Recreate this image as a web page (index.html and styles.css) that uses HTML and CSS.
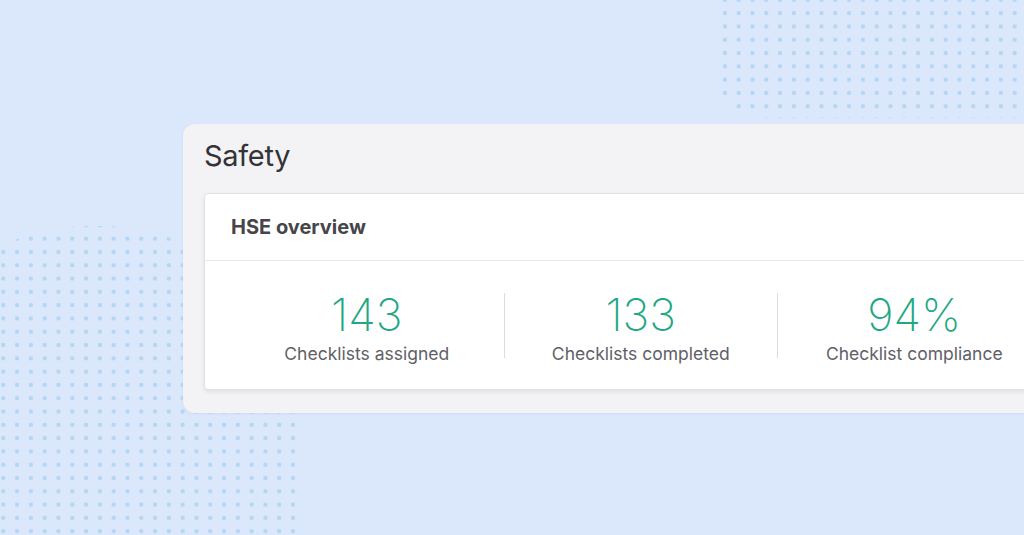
FILE: index.html
```html
<!DOCTYPE html>
<html lang="en">
<head>
<meta charset="utf-8">
<title>Safety</title>
<link rel="stylesheet" href="styles.css">
</head>
<body>
<div class="dots dots-top"></div>
<div class="dots dots-left"></div>
<main class="stage">
  <section class="panel">
    <h1 class="panel-title">Safety</h1>
    <div class="card">
      <div class="card-header">HSE overview</div>
      <div class="stats">
        <div class="stat">
          <div class="stat-value">143</div>
          <div class="stat-label">Checklists assigned</div>
        </div>
        <div class="stat">
          <div class="stat-value">133</div>
          <div class="stat-label">Checklists completed</div>
        </div>
        <div class="stat">
          <div class="stat-value">94%</div>
          <div class="stat-label">Checklist compliance</div>
        </div>
      </div>
    </div>
  </section>
</main>
</body>
</html>
```

FILE: styles.css
```css
html, body {
  margin: 0;
  padding: 0;
}
body {
  width: 1024px;
  height: 535px;
  overflow: hidden;
  background: #dbe8fc;
  font-family: "Inter", "Roboto", "Liberation Sans", sans-serif;
  position: relative;
}
.dots {
  position: absolute;
  background-image: radial-gradient(circle, #b4d6f4 1.9px, rgba(180, 214, 244, 0) 2.5px);
  background-size: 13.8px 13.3px;
}
.dots-top {
  left: 716px;
  top: -60px;
  width: 340px;
  height: 178px;
  border-bottom-left-radius: 40px;
  background-position: 2px 0px;
}
.dots-left {
  left: -120px;
  top: 226px;
  width: 422px;
  height: 420px;
  border-top-left-radius: 210px;
  border-top-right-radius: 200px;
  background-position: 6px 6px;
}
.stage {
  position: relative;
  padding: 124px 0 0 183px;
}
.panel {
  width: 913px;
  background: #f3f3f6;
  border-radius: 12px;
  padding: 14px 21px 23px 21px;
  box-sizing: border-box;
  box-shadow: 0 1px 3px rgba(40, 60, 100, 0.08);
}
.panel-title {
  margin: 0 0 19px 0;
  font-size: 29px;
  line-height: 36px;
  font-weight: 400;
  color: #333338;
  letter-spacing: -0.3px;
}
.card {
  background: #fff;
  border: 1px solid #e2e2e6;
  border-radius: 4px;
  box-shadow: 0 2px 4px rgba(0, 0, 0, 0.08);
}
.card-header {
  height: 66px;
  display: flex;
  align-items: center;
  padding-left: 26px;
  font-size: 20px;
  font-weight: 700;
  color: #45454a;
  border-bottom: 1px solid #e6e6ea;
}
.stats {
  display: grid;
  grid-template-columns: repeat(3, 273.5px);
  padding: 32px 0 31px 25px;
}
.stat {
  display: flex;
  flex-direction: column;
  align-items: center;
  border-left: 1px solid #dcdce0;
}
.stat:first-child {
  border-left: none;
}
.stat-value {
  font-size: 45px;
  line-height: 48px;
  font-weight: 200;
  color: #1fa883;
  margin-top: -2.5px;
}
.stat-label {
  font-size: 17.5px;
  line-height: 16px;
  color: #5f6067;
  margin-top: 7px;
  margin-bottom: -3.5px;
}
```
